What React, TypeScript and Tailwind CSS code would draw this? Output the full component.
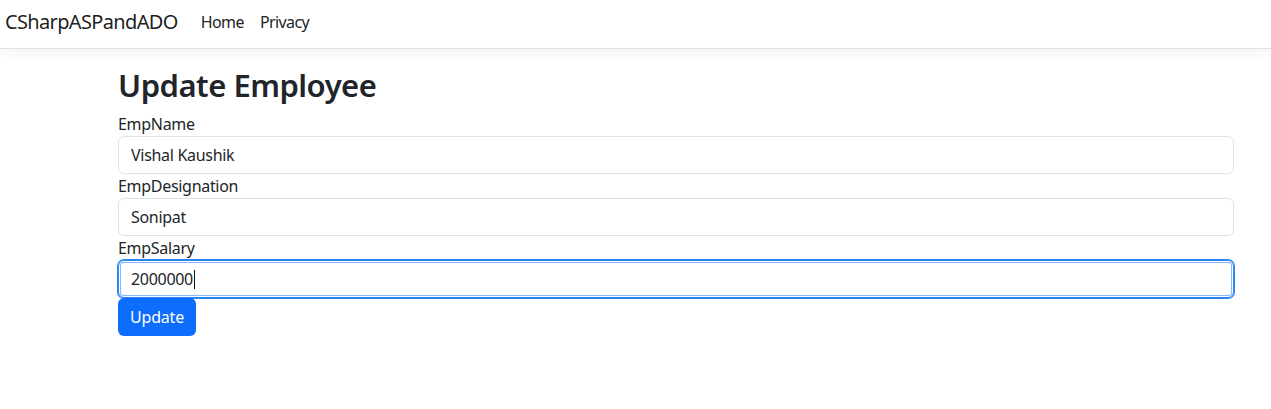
import React from "react";

const font = { fontFamily: '"Noto Sans", "Open Sans", sans-serif' };

export default function App() {
  return (
    <div className="min-h-[409px] bg-white text-[#212529]" style={font}>
      <nav className="h-[49px] border-b border-[#e3e3e3] bg-white shadow-[0_4px_12px_rgba(0,0,0,0.05)] flex items-center pb-[5px]">
        <a className="ml-[5px] text-[20px] leading-[30px] text-[rgba(0,0,0,0.9)] tracking-[-0.65px]">CSharpASPandADO</a>
        <ul className="flex ml-[15px] text-[16px] leading-[24px] text-[#212529]">
          <li className="px-[8px] tracking-[-0.6px]">Home</li>
          <li className="px-[8px] tracking-[-0.6px]">Privacy</li>
        </ul>
      </nav>
      <main className="ml-[118px] w-[1116px] pt-[16px]">
        <h1 className="text-[31px] leading-[40px] font-semibold mb-[7px] tracking-[-0.5px]">Update Employee</h1>
        <form className="flex flex-col text-[16px] leading-[24px]">
          <label className="tracking-[-0.3px]">EmpName</label>
          <div className="h-[38px] border border-[#dee2e6] rounded-[6px] px-[12px] py-[6px] tracking-[-0.3px]">Vishal Kaushik</div>
          <label className="tracking-[-0.3px]">EmpDesignation</label>
          <div className="h-[38px] border border-[#dee2e6] rounded-[6px] px-[12px] py-[6px] tracking-[-0.3px]">Sonipat</div>
          <label className="tracking-[-0.3px]">EmpSalary</label>
          <div className="h-[38px] border border-[#2a86f4] rounded-[6px] px-[12px] py-[6px] shadow-[0_0_0_1px_#2a86f4,inset_0_0_0_1px_#ffffff,inset_0_0_0_2px_#86b7fe] flex items-center tracking-[-0.3px]">
            <span>2000000</span>
            <span className="inline-block w-px h-[19px] bg-[#111] ml-[1px]" />
          </div>
          <div>
            <button type="button" className="h-[38px] px-[12px] bg-[#0d6efd] text-white rounded-[6px] text-[16px] leading-[24px] tracking-[-0.2px]">Update</button>
          </div>
        </form>
      </main>
    </div>
  );
}
